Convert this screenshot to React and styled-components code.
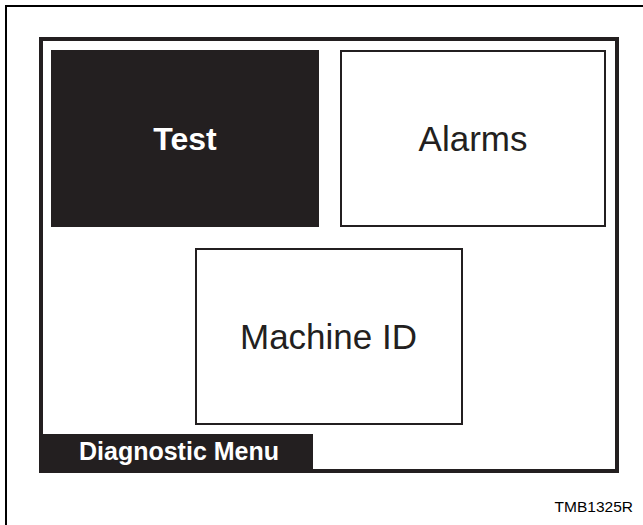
import React from 'react';
import styled, {createGlobalStyle} from 'styled-components';

const ink = '#231f20';

const GlobalStyle = createGlobalStyle`
  html, body {
    margin: 0;
    padding: 0;
    background: #fff;
  }
  body {
    font-family: "Liberation Sans", Arial, sans-serif;
    color: ${ink};
  }
`

const Page = styled.div`
  width: 643px;
  height: 525px;
  padding: 5px 0 0 5px;
  box-sizing: border-box;
  overflow: hidden;
`
const Sheet = styled.div`
  height: 100%;
  border-top: 2px solid #000;
  border-left: 2px solid #000;
  box-sizing: border-box;
  padding: 30px 0 0 32px;
  display: flex;
  flex-direction: column;
`
const Screen = styled.div`
  width: 580px;
  height: 436px;
  border: 4px solid ${ink};
  box-sizing: border-box;
  padding: 9px 9px 0 8px;
  display: flex;
  flex-direction: column;
`
const Row = styled.div`
  display: flex;
  gap: 21px;
  justify-content: ${props => props.center ? 'center' : 'flex-start'};
  margin-top: ${props => props.top || 0}px;
`
const Tile = styled.div`
  width: ${props => props.width}px;
  height: 177px;
  box-sizing: border-box;
  display: flex;
  align-items: center;
  justify-content: center;
  background: ${props => props.active ? ink : '#fff'};
  color: ${props => props.active ? '#fff' : ink};
  border: ${props => props.active ? 'none' : `2px solid ${ink}`};
  font-size: ${props => props.active ? 32 : 35}px;
  font-weight: ${props => props.active ? 700 : 400};
  line-height: 1;
`
const StatusBar = styled.div`
  margin: auto 0 0 -8px;
  width: 270px;
  height: 35px;
  background: ${ink};
  color: #fff;
  font-size: 25px;
  font-weight: 700;
  display: flex;
  align-items: center;
  padding-left: 36px;
  box-sizing: border-box;
`
const Caption = styled.div`
  margin-top: 26px;
  padding-right: 10px;
  text-align: right;
  font-size: 15.5px;
  line-height: 1;
  color: #000;
`

const App = () => {
  return(
    <Page>
      <GlobalStyle/>
      <Sheet>
        <Screen>
          <Row>
            <Tile width={268} active>Test</Tile>
            <Tile width={266}>Alarms</Tile>
          </Row>
          <Row center top={21}>
            <Tile width={268}>Machine ID</Tile>
          </Row>
          <StatusBar>Diagnostic Menu</StatusBar>
        </Screen>
        <Caption>TMB1325R</Caption>
      </Sheet>
    </Page>
  )
}

export default App;
